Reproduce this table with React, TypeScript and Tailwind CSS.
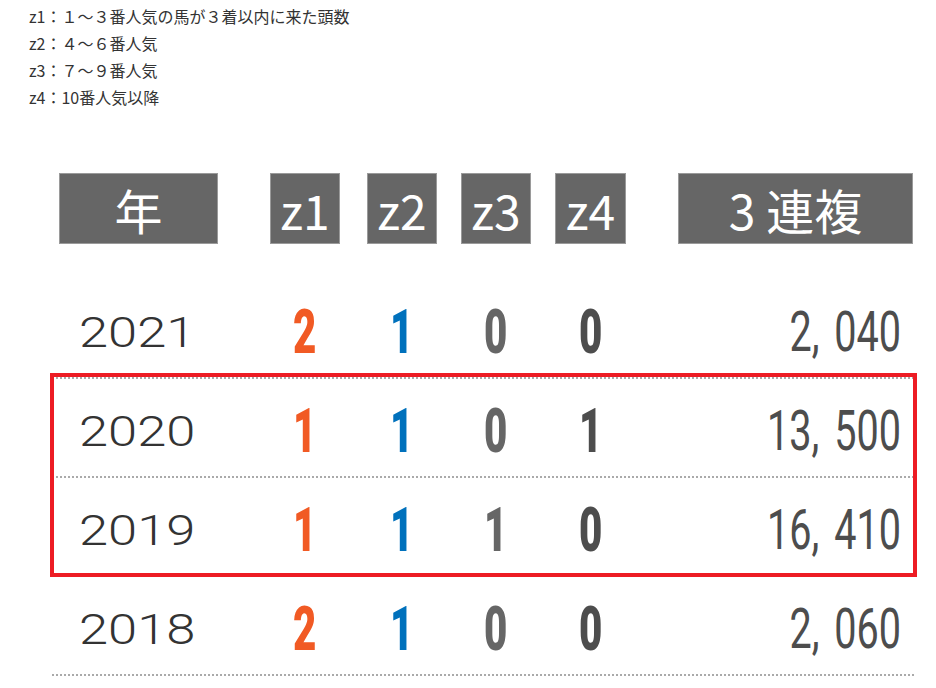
const rows = [
  { year: "2021", z: ["2", "1", "0", "0"], pay: "2, 040" },
  { year: "2020", z: ["1", "1", "0", "1"], pay: "13, 500" },
  { year: "2019", z: ["1", "1", "1", "0"], pay: "16, 410" },
  { year: "2018", z: ["2", "1", "0", "0"], pay: "2, 060" },
];

const zColors = ["text-[#f15a24]", "text-[#0071bc]", "text-[#666666]", "text-[#4d4d4d]"];

function Row({ r }: { r: (typeof rows)[number] }) {
  return (
    <div className="h-[99px] border-b-2 border-dotted border-[#aaaaaa] flex items-center pt-[8px]">
      <div className="w-[218px] pl-[27px]">
        <span className="inline-block origin-left scale-x-[1.22] font-['Roboto',sans-serif] font-light text-[43px] leading-none text-[#333333]">
          {r.year}
        </span>
      </div>
      <ZCell v={r.z[0]} c={zColors[0]} cls="w-[70px]" />
      <ZCell v={r.z[1]} c={zColors[1]} cls="w-[70px] ml-[27px]" />
      <ZCell v={r.z[2]} c={zColors[2]} cls="w-[70px] ml-[24px]" />
      <ZCell v={r.z[3]} c={zColors[3]} cls="w-[71px] ml-[24px]" />
      <div className="flex-1 text-right pr-[13px]">
        <span className="inline-block origin-right scale-x-[0.72] font-['Roboto',sans-serif] text-[55px] leading-none text-[#4d4d4d] [word-spacing:7px]">
          {r.pay}
        </span>
      </div>
    </div>
  );
}

function ZCell({ v, c, cls }: { v: string; c: string; cls: string }) {
  return (
    <div className={`${cls} flex justify-center`}>
      <span className={`inline-block scale-x-[0.66] font-['Roboto',sans-serif] font-black text-[61px] leading-none ${c}`}>
        {v}
      </span>
    </div>
  );
}

function HBox({ children, cls }: { children: React.ReactNode; cls: string }) {
  return (
    <div className={`${cls} h-[71px] bg-[#666666] border border-[#9a9a9a] flex items-center justify-center text-white text-[48px] leading-none font-normal font-['Noto_Sans_CJK_JP',sans-serif]`}>
      {children}
    </div>
  );
}

export default function App() {
  return (
    <div className="w-[936px] h-[688px] bg-white overflow-hidden">
      <div className="pl-[29px] pt-[3px] text-[16px] leading-[27px] text-[#333333] font-['Noto_Sans_CJK_JP',sans-serif]">
        <p>z1：１～３番人気の馬が３着以内に来た頭数</p>
        <p>z2：４～６番人気</p>
        <p>z3：７～９番人気</p>
        <p>z4：10番人気以降</p>
      </div>

      <div className="mt-[62px] pl-[59px] flex">
        <HBox cls="w-[159px]">年</HBox>
        <HBox cls="w-[70px] ml-[52px]">z1</HBox>
        <HBox cls="w-[70px] ml-[27px]">z2</HBox>
        <HBox cls="w-[70px] ml-[24px]">z3</HBox>
        <HBox cls="w-[71px] ml-[24px]">z4</HBox>
        <HBox cls="w-[235px] ml-[52px]">3 連複</HBox>
      </div>

      <div className="mt-[36px] ml-[52px] w-[862px]">
        <Row r={rows[0]} />
        <div className="relative">
          <Row r={rows[1]} />
          <Row r={rows[2]} />
          <div className="absolute left-[-2px] right-[-3px] top-[-6px] bottom-0 border-4 border-[#ed1c24] pointer-events-none" />
        </div>
        <Row r={rows[3]} />
      </div>
    </div>
  );
}
